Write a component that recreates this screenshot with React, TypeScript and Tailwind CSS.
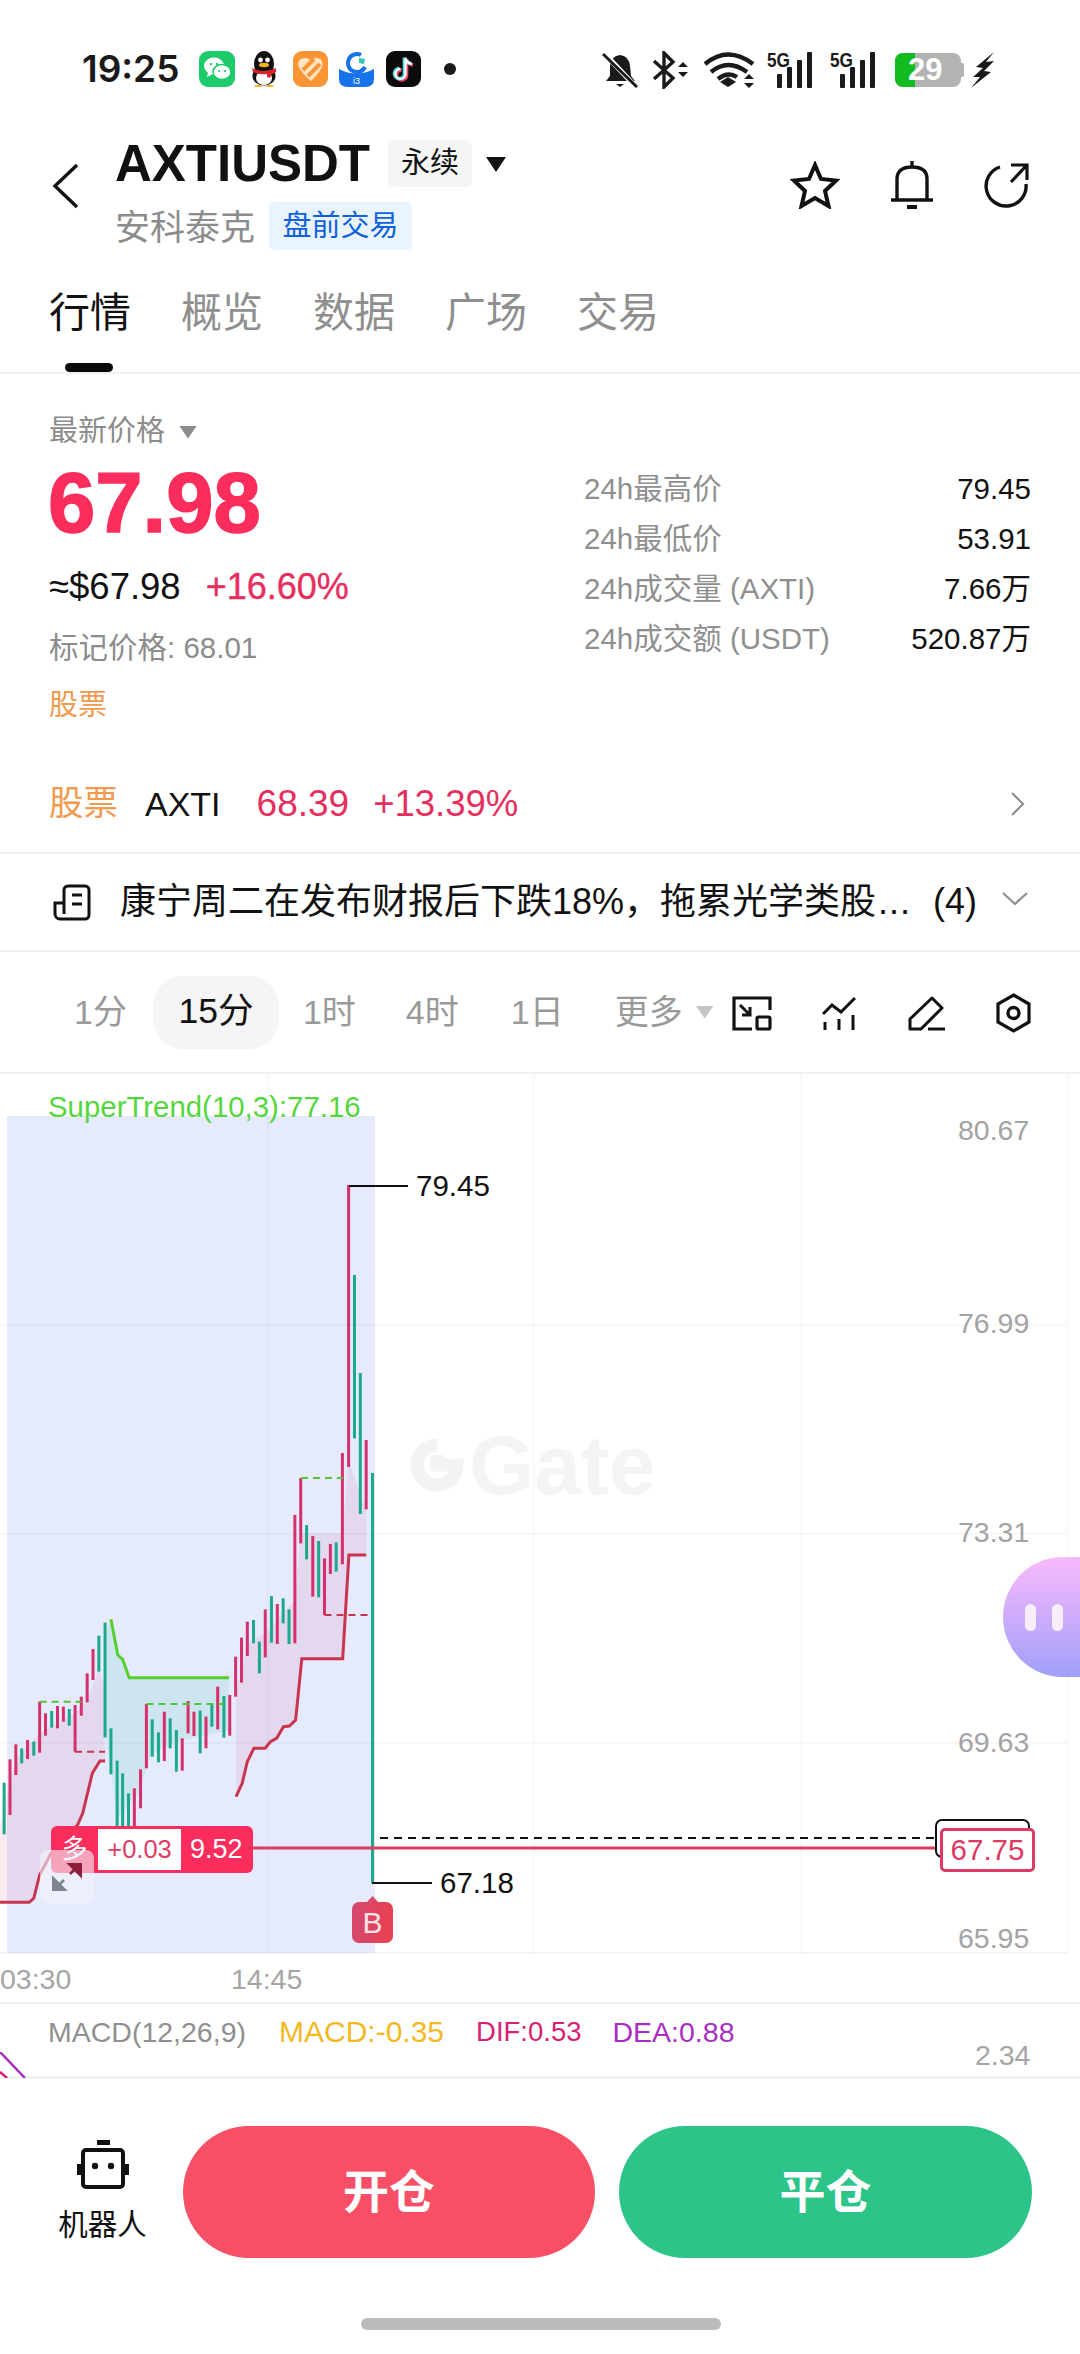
import React from "react";

const FONT = '"Liberation Sans", "Noto Sans CJK SC", sans-serif';
const RED = "#d5306a";
const GREEN = "#1ca88a";

type C = [number, number, number, 0 | 1];
const candles: C[] = [
  [12, 848, 1003, 1], [29, 778, 945, 0], [46, 733, 825, 0], [63, 745, 790, 1], [80, 720, 777, 0], [98, 725, 767, 1],
  [115, 605, 758, 0], [132, 640, 707, 0], [150, 633, 683, 1], [167, 618, 685, 0], [184, 620, 665, 0], [201, 627, 677, 1],
  [218, 615, 755, 0], [236, 590, 647, 0], [253, 520, 607, 0], [270, 447, 540, 0], [287, 407, 515, 1], [305, 368, 712, 1],
  [322, 685, 823, 1], [340, 782, 980, 1], [356, 820, 980, 1], [373, 880, 980, 1], [390, 865, 980, 0], [408, 808, 925, 0],
  [425, 612, 805, 0], [442, 658, 770, 1], [460, 697, 787, 1], [477, 635, 783, 0], [494, 655, 745, 1], [512, 690, 815, 1],
  [529, 715, 812, 0], [546, 603, 700, 0], [563, 635, 708, 0], [581, 632, 760, 1], [598, 650, 745, 0], [615, 612, 680, 1],
  [632, 560, 688, 0], [650, 588, 713, 1], [667, 585, 707, 0], [684, 470, 590, 0], [701, 413, 548, 0], [718, 365, 468, 0],
  [736, 360, 430, 1], [753, 425, 520, 1], [770, 328, 472, 0], [788, 288, 428, 1], [805, 312, 432, 0], [822, 295, 370, 1],
  [839, 328, 432, 1], [856, 45, 430, 0], [873, -66, 130, 0], [890, 75, 178, 1], [908, 108, 290, 0], [925, 123, 292, 1],
  [942, 175, 345, 0], [959, 132, 222, 0], [976, 127, 215, 1], [994, -141, 193, 0], [1012, -945, -99, 0], [1029, -675, -185, 1],
  [1046, -381, 42, 1], [1063, -180, 28, 0],
];

const px = (x: number) => x / 2.903;
const py = (y: number) => 1500 + y / 3;
const pts = (a: number[][]) => a.map(([x, y]) => `${px(x).toFixed(1)},${py(y).toFixed(1)}`).join(" ");

const redA = [[0, 1207], [85, 1207], [98, 1195], [115, 1125], [148, 1060], [225, 975], [240, 940], [268, 820], [290, 783], [305, 783]];
const redB = [[685, 890], [703, 850], [718, 785], [737, 745], [770, 745], [785, 725], [803, 715], [823, 680], [840, 678], [858, 660], [865, 590], [876, 476], [995, 476], [1002, 350], [1013, 165], [1063, 165]];
const greenL = [[322, 358], [342, 465], [356, 478], [375, 533], [665, 533]];

function Chart() {
  return (
    <svg className="absolute left-0 top-0" width="1080" height="930" viewBox="0 1074 1080 930">
      <rect x="7" y="1116" width="368" height="837" fill="#e5ebfd" />
      {[1325, 1534, 1743].map((y) => (
        <line key={y} x1="0" x2="1068" y1={y} y2={y} stroke="#000" strokeOpacity="0.04" strokeWidth="1.5" />
      ))}
      <line x1="0" x2="1068" y1="1953" y2="1953" stroke="#000" strokeOpacity="0.05" strokeWidth="1.5" />
      {[268, 534, 801, 1068].map((x) => (
        <line key={x} x1={x} x2={x} y1="1074" y2="1953" stroke="#000" strokeOpacity="0.03" strokeWidth="1.5" />
      ))}
      <polygon
        points={pts([...redA, [305, 560], [287, 510], [253, 600], [218, 640], [115, 700], [46, 780], [29, 850], [0, 980]])}
        fill="#d5306a"
        fillOpacity="0.1"
      />
      <polygon
        points={pts([...greenL, [665, 690], [530, 720], [440, 760], [400, 880], [340, 960], [322, 800], [305, 700], [305, 400]])}
        fill="#2fc08a"
        fillOpacity="0.13"
      />
      <polygon
        points={pts([...redB.slice().reverse(), [685, 580], [718, 430], [770, 400], [856, 300], [873, 100], [994, 100], [1012, -120], [1063, 30]])}
        fill="#d5306a"
        fillOpacity="0.1"
      />
      {candles.map(([x, t, b, g], i) => (
        <line key={i} x1={px(x)} x2={px(x)} y1={py(t)} y2={py(b)} stroke={g ? GREEN : RED} strokeWidth="3" />
      ))}
      <line x1="372.5" x2="372.5" y1="1473" y2="1883" stroke={GREEN} strokeWidth="3" />
      <polyline points={pts(redA)} fill="none" stroke="#c9344f" strokeWidth="3" />
      <polyline points={pts(redB)} fill="none" stroke="#c9344f" strokeWidth="3" />
      <polyline points={pts(greenL)} fill="none" stroke="#55cf2e" strokeWidth="3" />
      <g strokeWidth="2" fill="none" strokeDasharray="7 5">
        <line x1={px(115)} x2={px(236)} y1={py(605)} y2={py(605)} stroke="#55c23c" />
        <line x1={px(425)} x2={px(650)} y1={py(612)} y2={py(612)} stroke="#55c23c" />
        <line x1="301" x2="343" y1="1478" y2="1478" stroke="#55c23c" />
        <line x1={px(218)} x2={px(305)} y1={py(755)} y2={py(755)} stroke="#c9344f" />
        <line x1={px(942)} x2={px(1067)} y1={py(345)} y2={py(345)} stroke="#c9344f" />
      </g>
      <line x1="349" x2="408" y1="1186" y2="1186" stroke="#111" strokeWidth="2" />
      <line x1="372" x2="432" y1="1883" y2="1883" stroke="#111" strokeWidth="2" />
      <line x1="380" x2="936" y1="1838" y2="1838" stroke="#111" strokeWidth="2" strokeDasharray="8 6" />
      <line x1="250" x2="945" y1="1848" y2="1848" stroke="#dc3a63" strokeWidth="3" />
      <rect x="936" y="1820" width="93" height="37" rx="6" fill="#fff" stroke="#111" strokeWidth="2" />
      <polygon points="372.5,1896 367,1902 378,1902" fill="#dd4868" />
    </svg>
  );
}

const Watermark = () => (
  <div className="absolute left-[410px] top-[361px] flex items-center gap-[5px] text-[#f4f4f4]">
    <svg width="54" height="56" viewBox="0 0 54 56">
      <path d="M27 8 A20 20 0 1 0 47 28 H27 V18" fill="none" stroke="#f3f3f3" strokeWidth="13" />
    </svg>
    <span className="text-[84px] font-bold leading-[60px]">Gate</span>
  </div>
);

function StatusLeft() {
  return (
    <div className="flex items-center">
      <span className="w-[100px] text-[37px] font-semibold leading-[36px] text-[#1a1a1a]" style={{ fontFamily: "Inter, sans-serif" }}>
        19:25
      </span>
      <svg className="ml-[17px]" width="36" height="36" viewBox="0 0 36 36">
        <rect width="36" height="36" rx="9" fill="#1ecb6b" />
        <ellipse cx="15" cy="15" rx="10" ry="8.5" fill="#fff" />
        <path d="M9 21 L8 26 L14 23Z" fill="#fff" />
        <ellipse cx="23" cy="21" rx="9" ry="7.5" fill="#fff" stroke="#1ecb6b" strokeWidth="1.5" />
        <circle cx="12" cy="13" r="1.2" fill="#1ecb6b" />
        <circle cx="18" cy="13" r="1.2" fill="#1ecb6b" />
        <circle cx="20" cy="20" r="1.1" fill="#1ecb6b" />
        <circle cx="26" cy="20" r="1.1" fill="#1ecb6b" />
      </svg>
      <svg className="ml-[15px]" width="28" height="36" viewBox="0 0 28 36">
        <ellipse cx="14" cy="13" rx="10" ry="13" fill="#111" />
        <ellipse cx="14" cy="25" rx="11.5" ry="9.5" fill="#111" />
        <ellipse cx="14" cy="27" rx="8" ry="7" fill="#fff" />
        <circle cx="10.5" cy="9" r="2.4" fill="#fff" />
        <circle cx="17.5" cy="9" r="2.4" fill="#fff" />
        <ellipse cx="14" cy="14" rx="5" ry="2.2" fill="#f5b21c" />
        <path d="M2 17 Q14 23 26 17 L26 21 Q20 24 20 27 L17 26 L17 23 Q10 24 3 21Z" fill="#d8232a" />
        <ellipse cx="8" cy="35" rx="4" ry="1" fill="#f5b21c" />
        <ellipse cx="20" cy="35" rx="4" ry="1" fill="#f5b21c" />
      </svg>
      <svg className="ml-[15px]" width="35" height="36" viewBox="0 0 35 36">
        <rect width="35" height="36" rx="9" fill="#fb9433" />
        <path d="M5 14 Q5 7 12 7 Q16 7 18 10 Q21 6 25 7 Q31 9 29 16 Q27 21 18 30 Q8 22 5 14Z" fill="#ffe3c2" />
        <path d="M10 19 L21 8 M15 25 L27 13" stroke="#fb9433" strokeWidth="4" />
      </svg>
      <svg className="ml-[11px]" width="35" height="36" viewBox="0 0 35 36">
        <path d="M0 18 Q17 27 35 18 V28 Q35 36 26 36 H9 Q0 36 0 28Z" fill="#1672ea" />
        <path d="M22 4 A9 9 0 1 0 26 16" fill="none" stroke="#1672ea" strokeWidth="4" />
        <path d="M20 7 L26 8 L25 13 L20 12Z" fill="#36c4b5" />
        <text x="17.5" y="33" fontSize="9" fill="#fff" textAnchor="middle">i3</text>
      </svg>
      <svg className="ml-[12px]" width="35" height="36" viewBox="0 0 35 36">
        <rect width="35" height="36" rx="9" fill="#0b0b0e" />
        <path d="M19.5 7 V23 A5 5 0 1 1 14.5 18 M19.5 7 Q20.5 12 26 13" fill="none" stroke="#ef4a68" strokeWidth="3.6" transform="translate(1 1)" />
        <path d="M19.5 7 V23 A5 5 0 1 1 14.5 18 M19.5 7 Q20.5 12 26 13" fill="none" stroke="#5ae0e6" strokeWidth="3.6" transform="translate(-1 -0.5)" />
        <path d="M19.5 7 V23 A5 5 0 1 1 14.5 18 M19.5 7 Q20.5 12 26 13" fill="none" stroke="#fff" strokeWidth="2.2" />
      </svg>
      <span className="ml-[23px] size-[12px] rounded-full bg-[#1a1a1a]" />
    </div>
  );
}

const FiveG = () => (
  <div className="relative h-[36px] w-[47px]">
    <span className="absolute left-0 top-[-3px] origin-left scale-x-[0.82] text-[21px] font-bold leading-[22px] text-[#1a1a1a]">5G</span>
    <div className="absolute bottom-0 left-[10px] flex items-end gap-[5px]">
      <span className="h-[14px] w-[5px] rounded-[1px] bg-[#1a1a1a]" />
      <span className="h-[21px] w-[5px] rounded-[1px] bg-[#1a1a1a]" />
      <span className="h-[28px] w-[5px] rounded-[1px] bg-[#1a1a1a]" />
      <span className="h-[36px] w-[5px] rounded-[1px] bg-[#1a1a1a]" />
    </div>
  </div>
);

function StatusRight() {
  return (
    <div className="flex items-center">
      <svg width="36" height="36" viewBox="0 0 36 36">
        <path d="M18 3 Q27 4 28 14 L29 24 L33 29 H4 L8 24 L8 14 Q9 4 18 3Z" fill="#1a1a1a" />
        <path d="M14 32 H22 L18 35Z" fill="#1a1a1a" />
        <line x1="2" y1="1" x2="34" y2="35" stroke="#fff" strokeWidth="5" />
        <line x1="1" y1="2" x2="35" y2="35" stroke="#1a1a1a" strokeWidth="3" />
      </svg>
      <svg className="ml-[14px]" width="38" height="38" viewBox="0 0 38 38">
        <path d="M2 10 L21 27 L12 36 V2 L21 11 L2 28" fill="none" stroke="#1a1a1a" strokeWidth="3.4" />
        <path d="M26 16 L31 11 L36 16Z M26 21 L31 26 L36 21Z" fill="#1a1a1a" />
      </svg>
      <svg className="ml-[14px]" width="52" height="38" viewBox="0 0 52 38">
        <path d="M1 13 Q24 -6 49 13 M7 21 Q24 7 43 21 M14 28 Q24 20 33 26" fill="none" stroke="#1a1a1a" strokeWidth="4.4" />
        <path d="M16 31 L24 26 L32 31 L24 36Z" fill="#1a1a1a" />
        <path d="M40 28 L45 23 L50 28Z M40 32 L45 37 L50 32Z" fill="#1a1a1a" />
      </svg>
      <div className="ml-[11px]"><FiveG /></div>
      <div className="ml-[16px]"><FiveG /></div>
      <div className="relative ml-[18px] flex h-[34px] w-[66px] overflow-hidden rounded-[8px] bg-[#b3b3b3]">
        <span className="h-full w-[20px] bg-[#12bb1f]" />
        <span className="absolute left-[13px] top-0 text-[31px] font-bold leading-[34px] text-white">29</span>
      </div>
      <span className="h-[14px] w-[3px] rounded-r-[2px] bg-[#b3b3b3]" />
      <svg className="ml-[7px]" width="24" height="36" viewBox="0 0 24 36">
        <path d="M23 0 L5 15 L12 16 L2 25 L9 25 L0 36 L20 20 L13 19 L23 9 L15 10Z" fill="#1a1a1a" />
      </svg>
    </div>
  );
}

const HeaderIcons = () => (
  <div className="flex items-center gap-[50px]">
    <svg width="50" height="48" viewBox="0 0 50 48">
      <polygon points="25,4 31,18 46,19.5 35,30 38.5,45 25,37 11.5,45 15,30 4,19.5 19,18" fill="none" stroke="#111" strokeWidth="4" strokeLinejoin="miter" />
    </svg>
    <svg width="46" height="52" viewBox="0 0 46 52" className="ml-[-1px]">
      <path d="M23 2 V8 M8 40 V20 Q8 8 23 8 Q38 8 38 20 V40" fill="none" stroke="#111" strokeWidth="3.4" />
      <path d="M2 41 H44" stroke="#111" strokeWidth="3.6" />
      <path d="M18 48 H28" stroke="#111" strokeWidth="4" />
    </svg>
    <svg width="46" height="46" viewBox="0 0 46 46" className="ml-[-1px]">
      <path d="M16 5 A20 20 0 1 0 42 22" fill="none" stroke="#111" strokeWidth="3.4" />
      <path d="M27 3 H43 V18 M43 3 L27 20" fill="none" stroke="#111" strokeWidth="3.2" />
    </svg>
  </div>
);

const Tri = ({ cls }: { cls: string }) => <span className={`inline-block [clip-path:polygon(0_0,100%_0,50%_100%)] ${cls}`} />;

const stats = [
  ["24h最高价", "79.45"],
  ["24h最低价", "53.91"],
  ["24h成交量 (AXTI)", "7.66万"],
  ["24h成交额 (USDT)", "520.87万"],
];

export default function App() {
  return (
    <div className="relative h-[2354px] w-[1080px] overflow-hidden bg-white text-[#111]" style={{ fontFamily: FONT }}>
      {/* status bar */}
      <div className="flex h-[135px] items-start justify-between pl-[82px] pr-[85px] pt-[51px]">
        <StatusLeft />
        <StatusRight />
      </div>

      {/* header */}
      <div className="flex h-[140px] items-start pl-[52px] pr-[50px]">
        <svg className="mt-[28px]" width="27" height="46" viewBox="0 0 27 46">
          <path d="M25 2 L3 23 L25 44" fill="none" stroke="#111" strokeWidth="3.4" />
        </svg>
        <div className="ml-[36px] flex flex-col">
          <div className="mt-[5px] flex h-[47px] items-center">
            <span className="text-[51px] font-bold leading-[47px]">AXTIUSDT</span>
            <span className="ml-[18px] flex h-[47px] w-[84px] items-center justify-center rounded-[6px] bg-[#f5f5f5] text-[29px]">永续</span>
            <Tri cls="ml-[14px] mt-[2px] h-[15px] w-[20px] bg-[#111]" />
          </div>
          <div className="mt-[15px] flex h-[48px] items-center">
            <span className="pt-[5px] text-[35px] text-[#8c8c8c]">安科泰克</span>
            <span className="ml-[14px] flex h-[48px] w-[143px] items-center justify-center rounded-[5px] bg-[#eaf4ff] pt-[2px] text-[29px] text-[#0f62dc]">盘前交易</span>
          </div>
        </div>
        <div className="ml-auto mt-[24px]">
          <HeaderIcons />
        </div>
      </div>

      {/* tabs */}
      <div className="relative h-[99px] border-b-2 border-[#f1f1f1] pl-[49px] pt-[10px]">
        <div className="flex gap-[50px] text-[41px] leading-[56px] text-[#8f8f8f]">
          <span className="text-[#111]">行情</span>
          <span>概览</span>
          <span>数据</span>
          <span>广场</span>
          <span>交易</span>
        </div>
        <span className="absolute bottom-0 left-[65px] h-[9px] w-[48px] rounded-full bg-[#0a0a0a]" />
      </div>

      {/* price */}
      <div className="flex h-[376px]">
        <div className="w-[584px] pl-[48px] pt-[38px]">
          <div className="ml-[1px] flex h-[40px] items-center text-[29px] text-[#8c8c8c]">
            最新价格
            <Tri cls="ml-[14px] h-[13px] w-[18px] bg-[#8c8c8c]" />
          </div>
          <div className="mt-[9px] text-[85px] font-bold leading-[84px] text-[#fb2d5c] [-webkit-text-stroke:1.5px_#fb2d5c]">67.98</div>
          <div className="ml-[1px] mt-[22px] flex h-[40px] items-center">
            <span className="text-[36.5px]">≈$67.98</span>
            <span className="ml-[25px] text-[36px] text-[#e5305f] [-webkit-text-stroke:0.4px_#e5305f]">+16.60%</span>
          </div>
          <div className="ml-[1px] mt-[21px] h-[40px] text-[29.5px] leading-[40px] text-[#8c8c8c]">标记价格: 68.01</div>
          <div className="ml-[1px] mt-[17px] h-[40px] text-[29px] leading-[40px] text-[#f09a4f]">股票</div>
        </div>
        <div className="w-[447px] pt-[90px]">
          {stats.map(([k, v]) => (
            <div key={k} className="flex h-[50px] items-center justify-between">
              <span className="text-[29.5px] text-[#8f8f8f]">{k}</span>
              <span className="text-[29.5px]">{v}</span>
            </div>
          ))}
        </div>
      </div>

      {/* stock row */}
      <div className="flex h-[104px] items-center border-b-2 border-[#f1f1f1] pl-[49px] pr-[55px] pt-[6px]">
        <span className="text-[34.5px] text-[#f09a4f]">股票</span>
        <span className="ml-[27px] text-[34px]">AXTI</span>
        <span className="ml-[36px] text-[37px] text-[#e5305f]">68.39</span>
        <span className="ml-[24px] text-[36.5px] text-[#e5305f]">+13.39%</span>
        <svg className="ml-auto" width="15" height="24" viewBox="0 0 15 24">
          <path d="M2 1 L13 12 L2 23" fill="none" stroke="#8f8f8f" strokeWidth="2.2" />
        </svg>
      </div>

      {/* news */}
      <div className="flex h-[98px] items-center border-b-2 border-[#f1f1f1] pl-[53px]">
        <svg width="38" height="37" viewBox="0 0 38 37">
          <path d="M11 30 V6 A4 4 0 0 1 15 2 H32 A4 4 0 0 1 36 6 V31 A4 4 0 0 1 32 35 H7 A5 5 0 0 1 2 30 V19 H11" fill="none" stroke="#111" strokeWidth="3" />
          <path d="M19 11 H29 M19 20 H29" stroke="#111" strokeWidth="3" />
        </svg>
        <span className="ml-[29px] flex w-[882px] whitespace-nowrap text-[36px] leading-[50px]">
          <span>康宁周二在发布财报后下跌18%，拖累光学类股</span>
          <span className="ml-[2px] tracking-[1px]">...</span>
          <span className="ml-[22px]">(4)</span>
        </span>
        <svg width="26" height="14" viewBox="0 0 26 14" className="mb-[6px]">
          <path d="M1 1 L13 12 L25 1" fill="none" stroke="#8f8f8f" strokeWidth="2.2" />
        </svg>
      </div>

      {/* timeframes */}
      <div className="flex h-[122px] items-center border-b-2 border-[#f1f1f1] text-[34px] text-[#999]">
        <span className="ml-[74px]">1分</span>
        <span className="ml-[26px] flex h-[73px] w-[126px] items-center justify-center rounded-[30px] bg-[#f5f5f5] text-[35.5px] text-[#111]">15分</span>
        <span className="ml-[24px]">1时</span>
        <span className="ml-[50px]">4时</span>
        <span className="ml-[52px]">1日</span>
        <span className="ml-[51px]">更多</span>
        <Tri cls="ml-[13px] h-[13px] w-[18px] bg-[#c4c4c4]" />
        <svg className="ml-[18px] mt-[2px]" width="40" height="35" viewBox="0 0 40 35">
          <path d="M20 33 H2 V2 H38 V14" fill="none" stroke="#111" strokeWidth="3.2" />
          <rect x="25" y="21" width="13" height="12" rx="1.5" fill="none" stroke="#111" strokeWidth="3.2" />
          <path d="M8 9 L18 19 M18 11 V19 H10" fill="none" stroke="#111" strokeWidth="3" />
        </svg>
        <svg className="ml-[50px] mt-[2px]" width="34" height="33" viewBox="0 0 34 33">
          <path d="M1 17 L10 8 L19 15 L33 1" fill="none" stroke="#111" strokeWidth="3" />
          <path d="M3 25 V33 M17 22 V33 M31 18 V33" stroke="#111" strokeWidth="3" />
        </svg>
        <svg className="ml-[52px] mt-[2px]" width="37" height="35" viewBox="0 0 37 35">
          <path d="M24 2 L34 12 L13 33 H2 V23 Z" fill="none" stroke="#111" strokeWidth="3" strokeLinejoin="round" />
          <path d="M20 33 H37" stroke="#111" strokeWidth="3" />
        </svg>
        <svg className="ml-[51px] mt-[2px]" width="35" height="40" viewBox="0 0 35 40">
          <polygon points="17.5,2 33,11 33,29 17.5,38 2,29 2,11" fill="none" stroke="#111" strokeWidth="3.2" />
          <circle cx="17.5" cy="20" r="5.5" fill="none" stroke="#111" strokeWidth="3.4" />
        </svg>
      </div>

      {/* chart */}
      <div className="relative h-[930px] border-b-2 border-[#f1f1f1]">
        <Chart />
        <Watermark />
        <span className="absolute left-[48px] top-[16px] text-[29.4px] leading-[34px] text-[#55d63e]">SuperTrend(10,3):77.16</span>
        <span className="absolute left-[958px] top-[39px] text-[28.5px] leading-[34px] text-[#a3a3a3]">80.67</span>
        <span className="absolute left-[958px] top-[232px] text-[28.5px] leading-[34px] text-[#a3a3a3]">76.99</span>
        <span className="absolute left-[958px] top-[441px] text-[28.5px] leading-[34px] text-[#a3a3a3]">73.31</span>
        <span className="absolute left-[958px] top-[651px] text-[28.5px] leading-[34px] text-[#a3a3a3]">69.63</span>
        <span className="absolute left-[958px] top-[847px] text-[28.5px] leading-[34px] text-[#a3a3a3]">65.95</span>
        <span className="absolute left-[416px] top-[95px] text-[29.5px] leading-[34px]">79.45</span>
        <span className="absolute left-[440px] top-[792px] text-[29.5px] leading-[34px]">67.18</span>

        {/* position label */}
        <div className="absolute left-[51px] top-[752px] flex h-[47px] w-[202px] items-center rounded-[6px] bg-[#fb2d5c] text-white">
          <span className="w-[47px] text-center text-[26px]">多</span>
          <span className="flex h-[41px] w-[83px] items-center justify-center bg-white text-[25.5px] text-[#dd3d66]">+0.03</span>
          <span className="ml-[9px] text-[27px]">9.52</span>
        </div>
        <div className="absolute left-[940px] top-[754px] flex h-[44px] w-[95px] items-center justify-center rounded-[5px] border-[3px] border-[#dc3a63] bg-white text-[29.5px] text-[#dc3a63]">67.75</div>

        {/* expand */}
        <div className="absolute left-[40px] top-[776px] flex size-[54px] items-center justify-center rounded-[8px] bg-[#f1f3fb]/60">
          <svg width="30" height="28" viewBox="0 0 30 28">
            <path d="M1 28 V15 L14 28Z M12 17 L5 24" fill="#7d848f" stroke="#7d848f" strokeWidth="2.5" />
            <path d="M29 0 V13 L16 0Z M18 11 L25 4" fill="#8a1f3b" stroke="#8a1f3b" strokeWidth="2.5" />
          </svg>
        </div>

        {/* B marker */}
        <div className="absolute left-[352px] top-[828px] flex size-[41px] items-center justify-center rounded-[7px] bg-gradient-to-r from-[#d6486f] to-[#e8404f] text-[30px] text-[#fde3ea]">B</div>

        {/* floating ball */}
        <div className="absolute left-[1003px] top-[483px] flex h-[120px] w-[77px] items-center gap-[16px] rounded-l-[60px] bg-gradient-to-b from-[#f9b9fb] to-[#9f9ffa] pl-[22px]">
          <span className="h-[27px] w-[11px] rounded-full bg-[#f6eefe]" />
          <span className="h-[27px] w-[11px] rounded-full bg-[#f6eefe]" />
        </div>

        <span className="absolute left-0 top-[888px] text-[28.5px] leading-[34px] text-[#a5a5a5]">03:30</span>
        <span className="absolute left-[231px] top-[888px] text-[28.5px] leading-[34px] text-[#a5a5a5]">14:45</span>
      </div>

      {/* MACD */}
      <div className="relative h-[75px] border-b-[3px] border-[#f2f2f2]">
        <div className="flex pl-[48px] pt-[8px] leading-[40px]">
          <span className="text-[28.5px] text-[#8f8f8f]">MACD(12,26,9)</span>
          <span className="ml-[33px] text-[30px] text-[#f4b81f]">MACD:-0.35</span>
          <span className="ml-[32px] text-[27.5px] text-[#d91f74]">DIF:0.53</span>
          <span className="ml-[31px] text-[28.5px] text-[#a92dc4]">DEA:0.88</span>
        </div>
        <span className="absolute left-[975px] top-[34px] text-[28.5px] leading-[34px] text-[#a5a5a5]">2.34</span>
        <svg className="absolute left-0 top-[48px]" width="26" height="26" viewBox="0 0 26 26">
          <path d="M0 0 L25 26" stroke="#a92dc4" strokeWidth="2.5" />
          <path d="M0 20 L7 26" stroke="#d91f74" strokeWidth="2.5" />
        </svg>
      </div>

      {/* bottom */}
      <div className="flex items-center pl-[58px] pt-[47px]">
        <div className="flex w-[89px] flex-col items-center">
          <svg width="52" height="50" viewBox="0 0 52 50">
            <rect x="20" y="1" width="13" height="5" fill="#111" />
            <rect x="6" y="11" width="40" height="37" rx="3" fill="none" stroke="#111" strokeWidth="4" />
            <rect x="0" y="25" width="6" height="11" fill="#111" />
            <rect x="46" y="25" width="6" height="11" fill="#111" />
            <circle cx="18" cy="27" r="3.2" fill="#111" />
            <circle cx="34" cy="27" r="3.2" fill="#111" />
          </svg>
          <span className="mt-[16px] text-[29.5px] leading-[40px]">机器人</span>
        </div>
        <button className="ml-[36px] flex h-[132px] w-[412px] items-center justify-center rounded-full bg-[#f94f66] text-[46px] font-bold text-white">开仓</button>
        <button className="ml-[24px] flex h-[132px] w-[413px] items-center justify-center rounded-full bg-[#2dc48a] text-[46px] font-bold text-white">平仓</button>
      </div>
      <div className="ml-[361px] mt-[60px] h-[12px] w-[360px] rounded-full bg-[#bbbbbb]" />
    </div>
  );
}
